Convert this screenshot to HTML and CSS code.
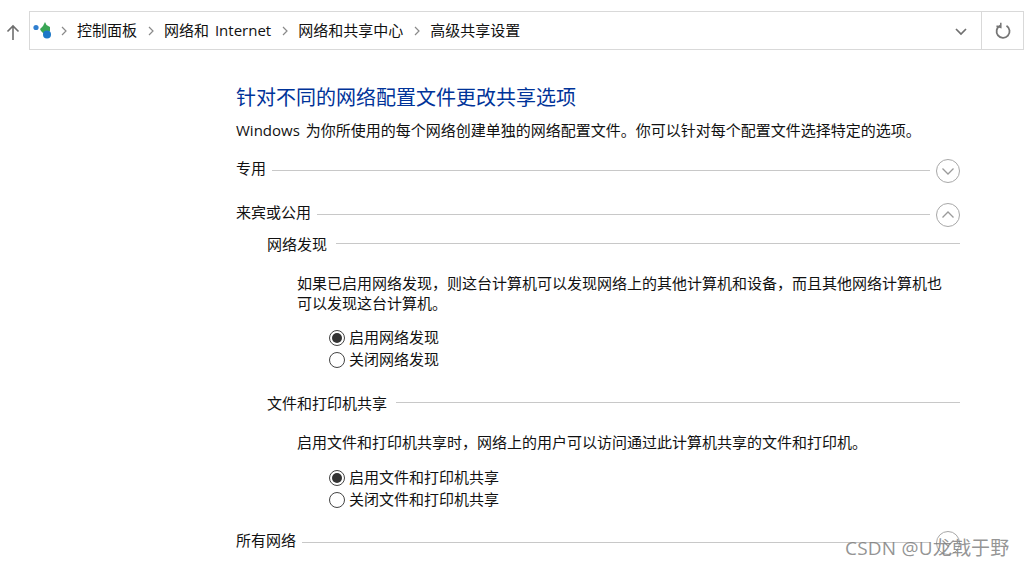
FILE: index.html
```
<!DOCTYPE html>
<html lang="zh-CN">
<head>
<meta charset="utf-8">
<title>高级共享设置</title>
<link rel="stylesheet" href="styles.css">
</head>
<body>
<div class="page">
  <header class="topbar">
    <svg class="up" width="14" height="17" viewBox="0 0 14 17"><path d="M7 16V2M1.500 7.500L7 2l5.500 5.500" fill="none" stroke="#6e6e6e" stroke-width="1.600"/></svg>
    <nav class="address">
      <svg class="netlogo" width="20" height="20" viewBox="0 0 20 20">
        <circle cx="3" cy="6.500" r="2.600" fill="#2f7fd0"/>
        <path d="M12 1l1.500 3L17 6v4l-5 4-4-4-1-2 3-3z" fill="#3aa655"/>
        <circle cx="14" cy="13.500" r="4" fill="#1c78c8"/>
      </svg>
      <svg class="sep" width="8" height="10" viewBox="0 0 8 10"><path d="M2 1l4 4-4 4" fill="none" stroke="#8a8a8a" stroke-width="1.200"/></svg>
      <span class="crumb">控制面板</span>
      <svg class="sep" width="8" height="10" viewBox="0 0 8 10"><path d="M2 1l4 4-4 4" fill="none" stroke="#8a8a8a" stroke-width="1.200"/></svg>
      <span class="crumb">网络和 Internet</span>
      <svg class="sep" width="8" height="10" viewBox="0 0 8 10"><path d="M2 1l4 4-4 4" fill="none" stroke="#8a8a8a" stroke-width="1.200"/></svg>
      <span class="crumb">网络和共享中心</span>
      <svg class="sep" width="8" height="10" viewBox="0 0 8 10"><path d="M2 1l4 4-4 4" fill="none" stroke="#8a8a8a" stroke-width="1.200"/></svg>
      <span class="crumb">高级共享设置</span>
      <svg class="dropdown" width="14" height="9" viewBox="0 0 14 9"><path d="M2 2l5 5 5-5" fill="none" stroke="#707070" stroke-width="1.700"/></svg>
      <div class="refresh">
        <svg width="18" height="18" viewBox="0 0 18 18"><path d="M6 3.600A6.500 6.500 0 1 0 12.500 3.800" fill="none" stroke="#757575" stroke-width="1.800"/><path d="M6.800 0.800L6.800 5.500 2.500 4" fill="none" stroke="#757575" stroke-width="1.500"/></svg>
      </div>
    </nav>
  </header>

  <main class="content">
    <h1 class="title">针对不同的网络配置文件更改共享选项</h1>
    <p class="intro">Windows 为你所使用的每个网络创建单独的网络配置文件。你可以针对每个配置文件选择特定的选项。</p>

    <div class="group group-private">
      <span class="label">专用</span><span class="rule"></span>
      <span class="toggle"><svg width="26" height="26" viewBox="0 0 26 26"><circle cx="13" cy="13" r="11.500" fill="none" stroke="#a8a8a8"/><path d="M7.500 10.500L13 16l5.500-5.500" fill="none" stroke="#9a9a9a" stroke-width="1.300"/></svg></span>
    </div>

    <div class="group group-guest">
      <span class="label">来宾或公用</span><span class="rule"></span>
      <span class="toggle"><svg width="26" height="26" viewBox="0 0 26 26"><circle cx="13" cy="13" r="11.500" fill="none" stroke="#a8a8a8"/><path d="M7.500 15.500L13 10l5.500 5.500" fill="none" stroke="#9a9a9a" stroke-width="1.300"/></svg></span>
    </div>

    <section class="sub sub-discovery">
      <div class="subhead"><span class="label">网络发现</span><span class="rule"></span></div>
      <p class="desc">如果已启用网络发现，则这台计算机可以发现网络上的其他计算机和设备，而且其他网络计算机也可以发现这台计算机。</p>
      <ul class="options">
        <li class="option"><span class="radio radio-on"></span>启用网络发现</li>
        <li class="option"><span class="radio"></span>关闭网络发现</li>
      </ul>
    </section>

    <section class="sub sub-sharing">
      <div class="subhead"><span class="label">文件和打印机共享</span><span class="rule"></span></div>
      <p class="desc">启用文件和打印机共享时，网络上的用户可以访问通过此计算机共享的文件和打印机。</p>
      <ul class="options">
        <li class="option"><span class="radio radio-on"></span>启用文件和打印机共享</li>
        <li class="option"><span class="radio"></span>关闭文件和打印机共享</li>
      </ul>
    </section>

    <div class="group group-all">
      <span class="label">所有网络</span><span class="rule"></span>
      <span class="toggle"><svg width="26" height="26" viewBox="0 0 26 26"><circle cx="13" cy="13" r="11.500" fill="none" stroke="#a8a8a8"/><path d="M7.500 10.500L13 16l5.500-5.500" fill="none" stroke="#9a9a9a" stroke-width="1.300"/></svg></span>
    </div>
  </main>

  <div class="watermark">CSDN @U龙戟于野</div>
</div>
</body>
</html>
```
FILE: styles.css
```
* { box-sizing: border-box; }
html, body { margin: 0; padding: 0; background: #fff; }
body {
  font-family: "Open Sans", "Noto Sans CJK SC", sans-serif;
  font-size: 15px;
  color: #111;
}
.page {
  position: relative;
  width: 1024px;
  height: 568px;
  padding-top: 11px;
  overflow: hidden;
}
.topbar {
  display: flex;
  align-items: center;
  height: 39px;
  padding-left: 6px;
}
.up { flex: none; margin-right: 9px; margin-top: 3px; }
.address {
  flex: 1;
  display: flex;
  align-items: center;
  height: 39px;
  border: 1px solid #d9d9d9;
  padding-left: 3px;
}
.netlogo { flex: none; margin-right: 7px; }
.sep { flex: none; margin-right: 9px; }
.crumb { margin: -2px 10px 0 0; line-height: 20px; white-space: nowrap; word-spacing: 2px; }
.dropdown { margin-left: auto; margin-right: 13px; margin-top: 2px; }
.refresh {
  width: 42px;
  height: 37px;
  border-left: 1px solid #d9d9d9;
  display: flex;
  align-items: center;
  justify-content: center;
}
.content { padding: 0 64px 0 236px; }
.title {
  margin: 0;
  padding-top: 35px;
  font-size: 20px;
  font-weight: 400;
  line-height: 26px;
  color: #003399;
}
.intro {
  margin: 9px 0 0;
  line-height: 20px;
  white-space: nowrap;
  word-spacing: 2px;
}
.group, .subhead { display: flex; align-items: center; }
.group { height: 26px; }
.group .label { margin-top: -6px; }
.group .rule { margin-left: 6px; margin-top: -2px; }
.group-private { margin-top: 18px; }
.group-guest { margin-top: 18px; }
.group-all { margin-top: 21px; }
.label { line-height: 20px; white-space: nowrap; flex: none; }
.subhead .label { margin-top: 2px; }
.rule { flex: 1; height: 1px; background: #c8c8c8; margin-left: 9px; }
.toggle { flex: none; width: 26px; height: 26px; margin-left: 5px; margin-right: -1px; }
.toggle svg { display: block; }
.sub { padding-left: 31px; }
.sub-discovery { margin-top: 5px; }
.sub-sharing { margin-top: 23px; }
.subhead { height: 20px; }
.desc { margin: 0; padding: 0 15px 0 30px; line-height: 20px; }
.sub-discovery .desc { margin-top: 20px; }
.sub-sharing .desc { margin-top: 20px; }
.options { list-style: none; margin: 0; padding: 0 0 0 62px; }
.sub-discovery .options { margin-top: 12px; }
.sub-sharing .options { margin-top: 13px; }
.option { display: flex; align-items: center; height: 22px; }
.radio {
  flex: none;
  width: 16px;
  height: 16px;
  margin: 4px 4px 0 0;
  border: 1px solid #444;
  border-radius: 50%;
  background: #fff;
  display: flex;
  align-items: center;
  justify-content: center;
}
.radio-on::after {
  content: "";
  width: 10px;
  height: 10px;
  border-radius: 50%;
  background: #333;
}
.watermark {
  position: absolute;
  left: 845px;
  top: 535px;
  font-size: 19px;
  letter-spacing: 0.2px;
  line-height: 26px;
  color: rgba(120, 120, 120, 0.8);
  white-space: nowrap;
}
```
